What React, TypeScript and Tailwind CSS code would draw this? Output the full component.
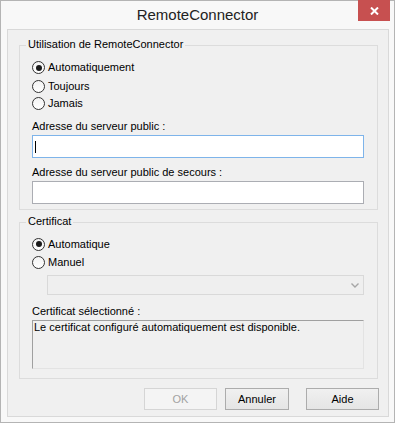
import React, { useState } from 'react';

const Radio: React.FC<{ label: string; checked: boolean; onSelect: () => void; className?: string }> = ({
  label,
  checked,
  onSelect,
  className = 'h-[18px]',
}) => (
  <label className={`flex items-center cursor-default ${className}`} onClick={onSelect}>
    <span className="flex h-[13px] w-[13px] items-center justify-center rounded-full border border-[#333333] bg-gradient-to-b from-[#f3f3f3] to-[#ffffff]">
      {checked && <span className="h-[6px] w-[6px] rounded-full bg-[#1a1a1a]" />}
    </span>
    <span className="ml-[3px] leading-[13px]">{label}</span>
  </label>
);

const GroupBox: React.FC<{ title: string; className?: string; children: React.ReactNode }> = ({
  title,
  className = '',
  children,
}) => (
  <div className={`relative ml-[11px] w-[359px] border border-[#dcdcdc] pl-[12px] pr-[13px] ${className}`}>
    <span className="absolute left-[6px] top-[-8px] bg-[#f0f0f0] px-[2px] leading-[13px]">{title}</span>
    {children}
  </div>
);

export default function App() {
  const [mode, setMode] = useState('auto');
  const [cert, setCert] = useState('auto');

  return (
    <div className="relative flex h-[423px] w-[395px] flex-col border border-[#b4b4b4] bg-[#f8f8f8] pb-[5px] font-['Liberation_Sans',Arial,sans-serif] text-[11px] text-black">
      {/* title bar */}
      <div className="flex h-[28px] items-center justify-center pt-[1px] text-[15px] text-[#222222]">
        RemoteConnector
      </div>
      <div className="absolute right-[4px] top-[-1px] flex h-[21px] w-[32px] items-center justify-center bg-[#c75050]">
        <svg width="9" height="8" viewBox="0 0 9 8">
          <path d="M1 0.5 L8 7.5 M8 0.5 L1 7.5" stroke="#ffffff" strokeWidth="2" />
        </svg>
      </div>

      {/* client area */}
      <div className="ml-[6px] flex h-[388px] w-[382px] flex-col border border-[#d9d9d9] bg-[#f0f0f0]">
        <GroupBox title="Utilisation de RemoteConnector" className="mt-[15px] pt-[12px] pb-[5px]">
          <Radio label="Automatiquement" checked={mode === 'auto'} onSelect={() => setMode('auto')} className="h-[19px]" />
          <Radio label="Toujours" checked={mode === 'always'} onSelect={() => setMode('always')} className="h-[18px]" />
          <Radio label="Jamais" checked={mode === 'never'} onSelect={() => setMode('never')} className="h-[17px]" />

          <div className="mt-[8px] leading-[13px]">Adresse du serveur public :</div>
          <div className="mt-[2px] flex h-[23px] items-center border border-[#7eb4ea] bg-white pl-[2px]">
            <span className="h-[12px] w-[1px] bg-black" />
          </div>

          <div className="mt-[8px] leading-[13px]">Adresse du serveur public de secours :</div>
          <div className="mt-[2px] h-[23px] border border-[#abadb3] bg-white" />
        </GroupBox>

        <GroupBox title="Certificat" className="mt-[12px] pt-[12px] pb-[9px]">
          <Radio label="Automatique" checked={cert === 'auto'} onSelect={() => setCert('auto')} className="h-[18px]" />
          <Radio label="Manuel" checked={cert === 'manual'} onSelect={() => setCert('manual')} className="h-[19px]" />

          <div className="ml-[15px] mt-[3px] flex h-[20px] items-center justify-end border border-[#d9d9d9] bg-[#efefef] pr-[4px]">
            <svg width="8" height="5" viewBox="0 0 8 5">
              <path d="M0.5 0.5 L4 4 L7.5 0.5" fill="none" stroke="#a6a6a6" strokeWidth="1.4" />
            </svg>
          </div>

          <div className="mt-[10px] leading-[13px]">Certificat sélectionné :</div>
          <div className="mt-[2px] h-[49px] border-t border-l border-[#a0a0a0] border-b-[#e3e3e3] border-r-[#e3e3e3] border-b border-r pl-[1px] leading-[13px]">
            Le certificat configuré automatiquement est disponible.
          </div>
        </GroupBox>

        {/* buttons */}
        <div className="mr-[9px] mt-[9px] flex justify-end">
          <button className="h-[22px] w-[73px] border border-[#d5d5d5] bg-[#f4f4f4] text-[#a2a2a2]" disabled>
            OK
          </button>
          <button className="ml-[8px] h-[22px] w-[64px] border border-[#acacac] bg-gradient-to-b from-[#f0f0f0] to-[#e5e5e5]">
            Annuler
          </button>
          <button className="ml-[17px] h-[22px] w-[73px] border border-[#acacac] bg-gradient-to-b from-[#f0f0f0] to-[#e5e5e5]">
            Aide
          </button>
        </div>
      </div>
    </div>
  );
}
